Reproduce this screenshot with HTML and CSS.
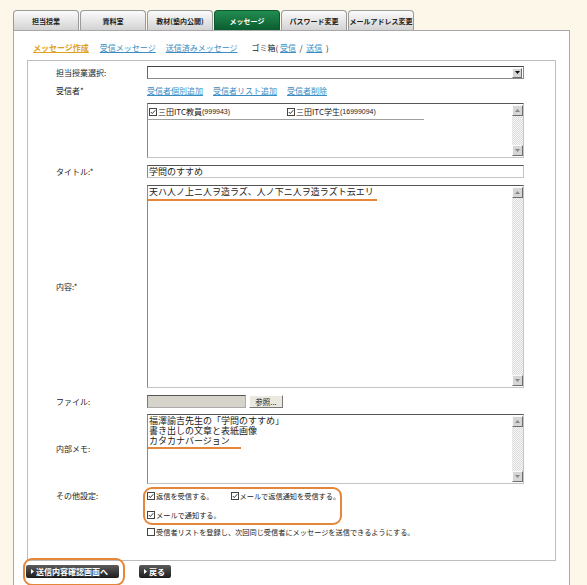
FILE: index.html
```html
<!DOCTYPE html>
<html lang="ja">
<head>
<meta charset="utf-8">
<title>メッセージ作成</title>
<link rel="stylesheet" href="styles.css">
</head>
<body>
<div class="page">
  <div class="tabs">
    <div class="tab">担当授業</div>
    <div class="tab">資料室</div>
    <div class="tab">教材(塾内公開)</div>
    <div class="tab active">メッセージ</div>
    <div class="tab">パスワード変更</div>
    <div class="tab">メールアドレス変更</div>
  </div>
  <div class="panel">
    <div class="subnav">
      <a class="nav-current">メッセージ作成</a>
      <a class="nav-link n2">受信メッセージ</a>
      <a class="nav-link n3">送信済みメッセージ</a>
      <span class="trash">ゴミ箱( <a class="nav-link">受信</a> &nbsp;/&nbsp; <a class="nav-link">送信</a> &nbsp;)</span>
    </div>
    <div class="form">
      <div class="row r-select">
        <div class="label">担当授業選択:</div>
        <div class="select"><span class="dd-btn"><svg width="5" height="3" viewBox="0 0 5 3"><polygon points="0,0 5,0 2.5,3" fill="#111"/></svg></span></div>
      </div>
      <div class="row r-links">
        <div class="label">受信者*</div>
        <div class="links">
          <a class="link">受信者個別追加</a>
          <a class="link">受信者リスト追加</a>
          <a class="link">受信者削除</a>
        </div>
      </div>
      <div class="row r-list">
        <div class="label"></div>
        <div class="listbox">
          <div class="list-body">
            <div class="list-items">
              <div class="item i1"><svg class="cb" width="8" height="8" viewBox="0 0 8 8"><rect x="0.5" y="0.5" width="7" height="7" fill="#fff" stroke="#444"/><path d="M1.8 4 L3.3 5.6 L6.3 2.2" fill="none" stroke="#222" stroke-width="0.9"/></svg>三田ITC教員<span class="num">(999943)</span></div>
              <div class="item"><svg class="cb" width="8" height="8" viewBox="0 0 8 8"><rect x="0.5" y="0.5" width="7" height="7" fill="#fff" stroke="#444"/><path d="M1.8 4 L3.3 5.6 L6.3 2.2" fill="none" stroke="#222" stroke-width="0.9"/></svg>三田ITC学生<span class="num">(16999094)</span></div>
            </div>
          </div>
          <div class="scrollbar">
            <span class="sb-btn"><svg width="5" height="3" viewBox="0 0 5 3"><polygon points="0,3 5,3 2.5,0" fill="#888"/></svg></span>
            <span class="sb-track"></span>
            <span class="sb-btn"><svg width="5" height="3" viewBox="0 0 5 3"><polygon points="0,0 5,0 2.5,3" fill="#888"/></svg></span>
          </div>
        </div>
      </div>
      <div class="row r-title">
        <div class="label">タイトル:*</div>
        <div class="input">学問のすすめ</div>
      </div>
      <div class="row r-body">
        <div class="label">内容:*</div>
        <div class="textarea ta-body">
          <div class="ta-text">
            <div>天ハ人ノ上ニ人ヲ造ラズ、人ノ下ニ人ヲ造ラズト云エリ</div>
            <div class="mark m1"></div>
          </div>
          <div class="scrollbar">
            <span class="sb-btn"><svg width="5" height="3" viewBox="0 0 5 3"><polygon points="0,3 5,3 2.5,0" fill="#888"/></svg></span>
            <span class="sb-track"></span>
            <span class="sb-btn"><svg width="5" height="3" viewBox="0 0 5 3"><polygon points="0,0 5,0 2.5,3" fill="#888"/></svg></span>
          </div>
        </div>
      </div>
      <div class="row r-file">
        <div class="label">ファイル:</div>
        <div class="file-box"></div>
        <div class="browse">参照...</div>
      </div>
      <div class="row r-memo">
        <div class="label">内部メモ:</div>
        <div class="textarea ta-memo">
          <div class="ta-text">
            <div>福澤諭吉先生の「学問のすすめ」</div>
            <div>書き出しの文章と表紙画像</div>
            <div>カタカナバージョン</div>
            <div class="mark m2"></div>
          </div>
          <div class="scrollbar">
            <span class="sb-btn"><svg width="5" height="3" viewBox="0 0 5 3"><polygon points="0,3 5,3 2.5,0" fill="#888"/></svg></span>
            <span class="sb-track"></span>
            <span class="sb-btn"><svg width="5" height="3" viewBox="0 0 5 3"><polygon points="0,0 5,0 2.5,3" fill="#888"/></svg></span>
          </div>
        </div>
      </div>
      <div class="row r-opts">
        <div class="label">その他設定:</div>
        <div class="opt-group">
          <div class="opt-row">
            <span class="opt"><svg class="cb" width="8" height="8" viewBox="0 0 8 8"><rect x="0.5" y="0.5" width="7" height="7" fill="#fff" stroke="#444"/><path d="M1.8 4 L3.3 5.6 L6.3 2.2" fill="none" stroke="#222" stroke-width="0.9"/></svg>返信を受信する。</span>
            <span class="opt o2"><svg class="cb" width="8" height="8" viewBox="0 0 8 8"><rect x="0.5" y="0.5" width="7" height="7" fill="#fff" stroke="#444"/><path d="M1.8 4 L3.3 5.6 L6.3 2.2" fill="none" stroke="#222" stroke-width="0.9"/></svg>メールで返信通知を受信する。</span>
          </div>
          <div class="opt-row r2">
            <span class="opt"><svg class="cb" width="8" height="8" viewBox="0 0 8 8"><rect x="0.5" y="0.5" width="7" height="7" fill="#fff" stroke="#444"/><path d="M1.8 4 L3.3 5.6 L6.3 2.2" fill="none" stroke="#222" stroke-width="0.9"/></svg>メールで通知する。</span>
          </div>
        </div>
      </div>
      <div class="row r-save">
        <div class="label"></div>
        <span class="opt"><svg class="cb" width="8" height="8" viewBox="0 0 8 8"><rect x="0.5" y="0.5" width="7" height="7" fill="#fff" stroke="#444"/></svg>受信者リストを登録し、次回同じ受信者にメッセージを送信できるようにする。</span>
      </div>
    </div>
    <div class="buttons">
      <div class="circled">
        <div class="btn b1"><svg width="3" height="5" viewBox="0 0 3 5"><polygon points="0,0 3,2.5 0,5" fill="#fff"/></svg>送信内容確認画面へ</div>
      </div>
      <div class="btn b2"><svg width="3" height="5" viewBox="0 0 3 5"><polygon points="0,0 3,2.5 0,5" fill="#fff"/></svg>戻る</div>
    </div>
  </div>
</div>
</body>
</html>
```

FILE: styles.css
```css
* { box-sizing: border-box; }
body {
  margin: 0;
  background: #fcf7e9;
  font-family: "Noto Sans CJK JP", "Liberation Sans", sans-serif;
  color: #222;
  overflow: hidden;
}
.page { padding: 10px 0 0 13px; }

.tabs { display: flex; gap: 1px; height: 20px; }
.tab {
  width: 66px;
  height: 20px;
  border: 1px solid #9a9a9a;
  border-bottom: none;
  border-radius: 4px 4px 0 0;
  background: linear-gradient(#fbfbfb, #d3d3d3);
  font-size: 7px;
  font-weight: bold;
  color: #222;
  display: flex;
  align-items: center;
  justify-content: center;
  white-space: nowrap;
}
.tab.active {
  background: linear-gradient(#218d50, #0a5c2f);
  border-color: #0a5a2e;
  color: #fff;
}

.panel {
  width: 557px;
  height: 570px;
  background: #fff;
  border: 1px solid #a8a8a8;
  border-bottom: none;
  padding: 0 13px;
}

.subnav {
  display: flex;
  align-items: flex-start;
  height: 29px;
  padding: 11px 0 0 6px;
  font-size: 8px;
  line-height: 12px;
  white-space: nowrap;
}
.nav-current { color: #e0a020; text-decoration: underline; font-weight: bold; }
.nav-link { color: #3a8cc2; text-decoration: underline; }
.n2 { margin-left: 11px; }
.n3 { margin-left: 10px; }
.trash { margin-left: 14px; color: #222; }

.form {
  width: 529px;
  height: 501px;
  border: 1px solid #bdbdbd;
  padding-left: 28px;
}
.row { display: flex; align-items: center; }
.label { width: 91px; flex-shrink: 0; font-size: 8px; line-height: 12px; white-space: nowrap; }

.r-select { margin-top: 5px; }
.select {
  width: 377px;
  height: 13px;
  border: 1px solid #8a8a8a;
  border-top-color: #444;
  border-left-color: #666;
  display: flex;
  justify-content: flex-end;
  align-items: center;
  padding-right: 1px;
}
.dd-btn, .sb-btn {
  width: 10px;
  height: 10px;
  background: #d6d6d6;
  border: 1px solid;
  border-color: #fafafa #6d6d6d #6d6d6d #fafafa;
  display: flex;
  align-items: center;
  justify-content: center;
  flex-shrink: 0;
}

.r-links { margin-top: 6px; height: 12px; }
.links { display: flex; gap: 10px; font-size: 8px; line-height: 12px; }
.link { color: #3a8cc2; text-decoration: underline; }

.r-list { margin-top: 6px; }
.listbox, .textarea {
  width: 377px;
  border: 1px solid #c4c4c4;
  border-top-color: #555;
  border-left-color: #8a8a8a;
  display: flex;
}
.listbox { height: 55px; }
.list-body { flex: 1; }
.list-items {
  width: 276px;
  display: flex;
  border-bottom: 1px solid #a0a0a0;
  height: 16px;
  align-items: center;
  font-size: 8px;
}
.item { display: flex; align-items: center; white-space: nowrap; }
.i1 { width: 139px; padding-left: 1px; }
.num { font-family: "Liberation Sans", sans-serif; font-size: 7px; }
.cb { flex-shrink: 0; margin-right: 1px; }

.scrollbar {
  width: 11px;
  display: flex;
  flex-direction: column;
  padding: 1px 0;
}
.scrollbar .sb-btn { width: 11px; height: 11px; }
.sb-track {
  flex: 1;
  background: repeating-conic-gradient(#dcdcdc 0 25%, #f6f6f6 0 50%) 0 0 / 2px 2px;
}

.r-title { margin-top: 7px; }
.input {
  width: 377px;
  height: 13px;
  border: 1px solid #c4c4c4;
  border-top-color: #555;
  border-left-color: #8a8a8a;
  font-size: 9px;
  line-height: 11px;
  padding-left: 1px;
}

.r-body { margin-top: 7px; }
.ta-body { height: 203px; }
.ta-text { flex: 1; padding: 1px 0 0 1px; font-size: 9px; line-height: 10px; white-space: nowrap; }
.mark { height: 2px; background: #e4873a; margin-left: -1px; }
.m1 { width: 229px; margin-top: 2px; }
.m2 { width: 93px; margin-top: 1px; }

.r-file { margin-top: 7px; }
.file-box {
  width: 99px;
  height: 13px;
  background: #d6d3cb;
  border: 1px solid #aaa;
  border-top-color: #555;
  border-left-color: #777;
}
.browse {
  margin-left: 3px;
  width: 34px;
  height: 13px;
  background: #ebe8e0;
  border: 1px solid;
  border-color: #fff #777 #777 #fff;
  font-size: 7.5px;
  line-height: 11px;
  text-align: center;
}

.r-memo { margin-top: 6px; }
.ta-memo { height: 70px; }

.r-opts { margin-top: 3px; align-items: flex-start; }
.r-opts .label { margin-top: 3px; }
.opt-group {
  width: 199px;
  margin-left: -4px;
  border: 2px solid #e4873a;
  border-radius: 9px;
  padding: 1px 0 2px 2px;
}
.opt-row { display: flex; height: 12px; align-items: center; }
.opt-row.r2 { margin-top: 7px; }
.opt { display: flex; align-items: center; font-size: 7.2px; line-height: 12px; white-space: nowrap; }
.o2 { margin-left: 17px; }

.r-save { margin-top: 1px; height: 12px; }

.buttons { display: flex; align-items: flex-start; }
.circled {
  width: 102px;
  height: 28px;
  margin: -3px 0 0 -4px;
  border: 2px solid #e4873a;
  border-radius: 9px;
  padding: 5px 0 0 1px;
}
.btn {
  height: 13px;
  background: linear-gradient(#5c5c5c, #1c1c1c);
  border-radius: 2px;
  color: #fff;
  font-size: 8px;
  font-weight: bold;
  display: flex;
  align-items: center;
  gap: 2px;
  padding-left: 5px;
  white-space: nowrap;
}
.b1 { width: 93px; }
.b2 { width: 32px; margin: 4px 0 0 14px; }
```
